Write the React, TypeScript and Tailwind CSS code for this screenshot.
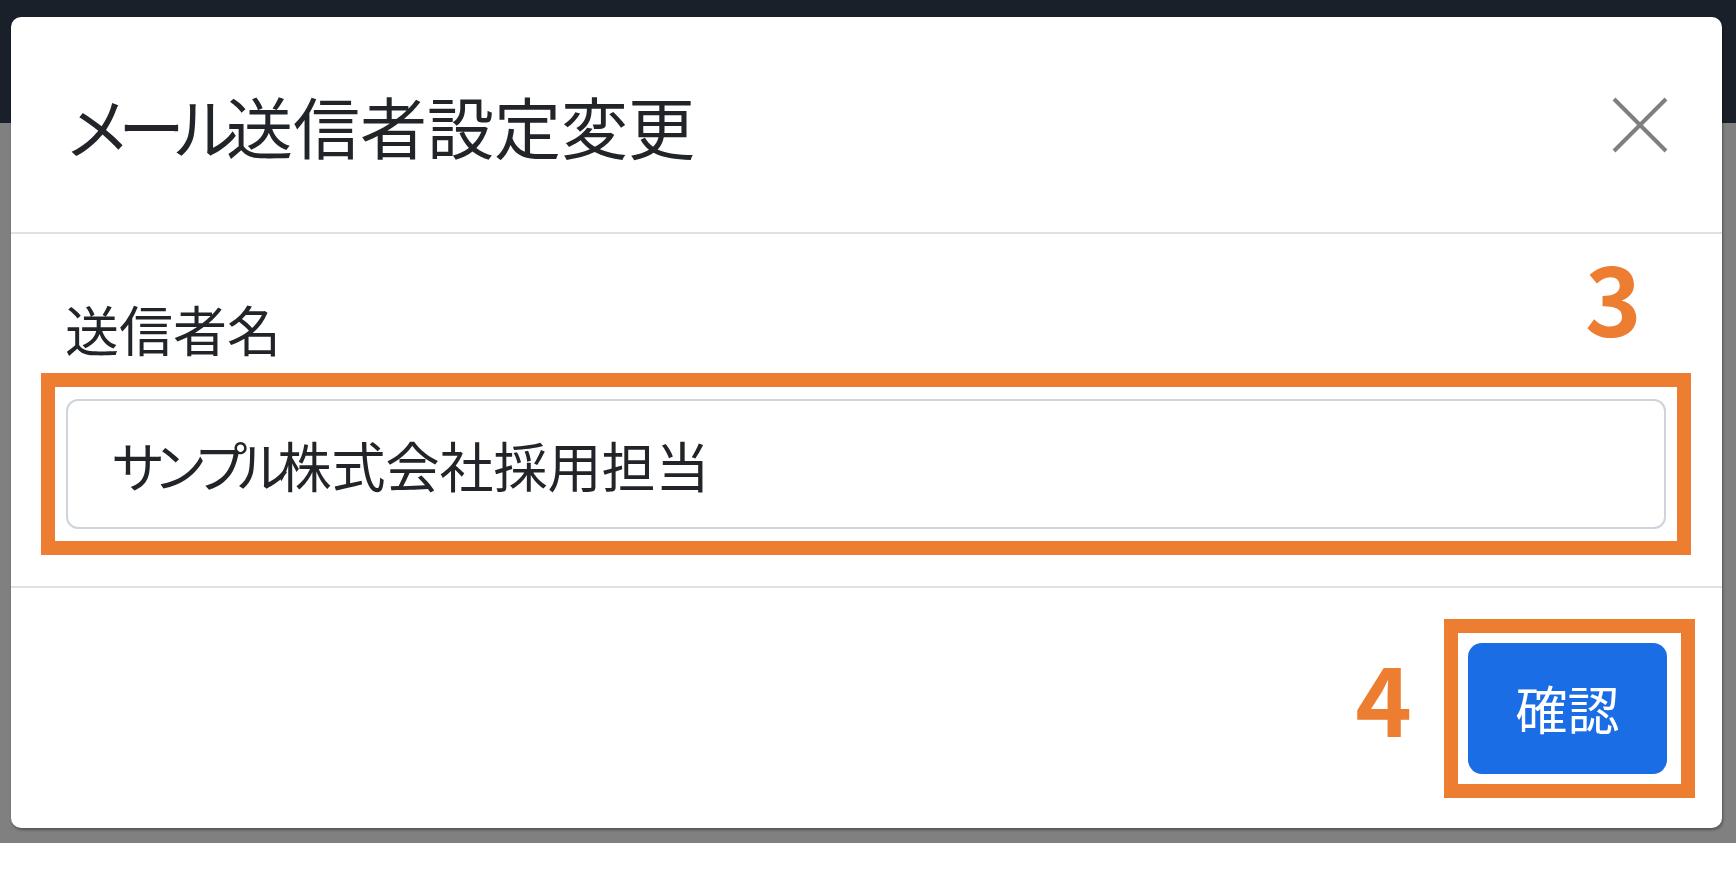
import React from "react";

const ORANGE = "border-[#ED7D31]";

function CloseIcon() {
  return (
    <svg width="56" height="56" viewBox="0 0 56 56" fill="none">
      <path d="M2 2 L54 54 M54 2 L2 54" stroke="#808080" strokeWidth="4" />
    </svg>
  );
}

export default function App() {
  return (
    <div className="relative w-[1736px] h-[888px] overflow-hidden bg-white font-['Noto_Sans_CJK_JP','Noto_Sans',sans-serif]">
      {/* page behind the backdrop */}
      <div className="flex flex-col">
        <div className="h-[123px] bg-[#19202a]" />
        <div className="h-[720px] bg-[#808080]" />
      </div>

      {/* modal */}
      <div className="absolute left-[11px] top-[17px] w-[1711px] h-[811px] bg-white rounded-[10px] shadow-[1px_2px_3px_rgba(0,0,0,0.35)] flex flex-col">
        {/* header */}
        <div className="h-[217px] flex items-center justify-between pl-[53px] pr-[54px] border-b-2 border-[#dee2e6] shrink-0">
          <h5 className="text-[67px] leading-none font-normal text-[#212529]">
            <span className="tracking-[-13px]">メール</span>送信者設定変更
          </h5>
          <button className="w-[56px] h-[56px] flex items-center justify-center">
            <CloseIcon />
          </button>
        </div>

        {/* body */}
        <div className="relative h-[354px] border-b-2 border-[#dee2e6] pt-[64px] pl-[30px] pr-[31px] shrink-0">
          <label className="block ml-[24px] h-[62px] text-[54px] leading-[62px] text-[#212529]">
            送信者名
          </label>
          <div className={`mt-[13px] border-[14px] ${ORANGE} px-[11px] py-[12px]`}>
            <div className="h-[130px] border-2 border-[#ced4da] rounded-[12px] flex items-center px-[43px] text-[54px] text-[#212529]">
              <span className="tracking-[-12px]">サンプル</span>株式会社採用担当
            </div>
          </div>
          <span className="absolute left-[1574px] top-[14px] text-[96px] leading-none font-bold text-[#ED7D31]">
            3
          </span>
        </div>

        {/* footer */}
        <div className="flex-1 flex items-center justify-end pr-[27px]">
          <span className="mb-[25px] mr-[32px] text-[96px] leading-none font-bold text-[#ED7D31]">
            4
          </span>
          <div className={`border-[14px] ${ORANGE} pt-[10px] pb-[10px] pl-[10px] pr-[14px]`}>
            <button className="w-[199px] h-[131px] rounded-[14px] bg-[#1a6de4] text-white text-[52px] flex items-center justify-center">
              確認
            </button>
          </div>
        </div>
      </div>
    </div>
  );
}
